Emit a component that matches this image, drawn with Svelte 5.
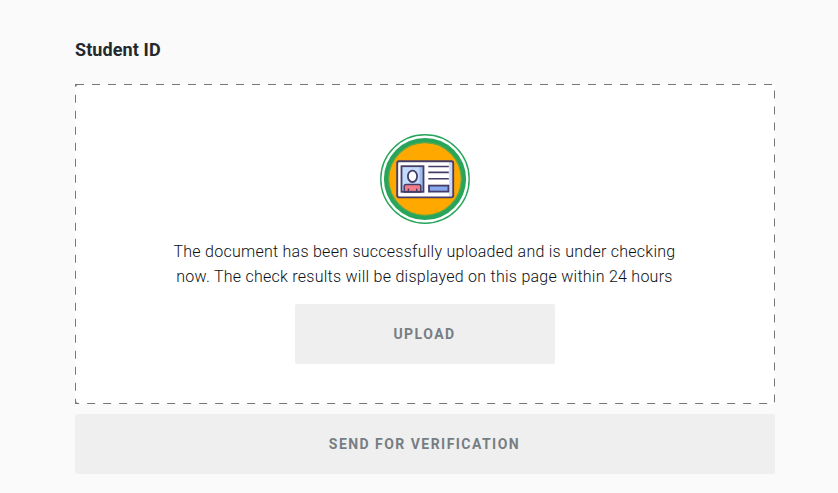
<script>
  let message = 'The document has been successfully uploaded and is under checking now. The check results will be displayed on this page within 24 hours';
</script>

<main>
  <h1>Student ID</h1>

  <section class="dropzone">
    <!-- dashed frame, drawn in svg to control the dash length -->
    <svg class="frame" width="700" height="320">
      <rect width="100%" height="100%" rx="3" />
    </svg>

    <svg class="icon" viewBox="0 0 90 90" width="90" height="90">
      <circle cx="45" cy="45" r="44.2" fill="#fff" stroke="#27a55a" stroke-width="1.4" />
      <circle cx="45" cy="45" r="41.1" fill="#27a55a" />
      <circle cx="45" cy="45" r="36.3" fill="#ffa800" stroke="#65a847" stroke-width="1.2" />
      <rect x="17.2" y="27.2" width="56" height="36.2" rx="1.8" fill="#fff" />
      <path d="M69.2 28h3v34.5h-3z" fill="#c8dbfc" />
      <rect x="17.2" y="27.2" width="56" height="36.2" rx="1.8" fill="none" stroke="#453d67" stroke-width="1.9" />
      <rect x="21.5" y="32.2" width="22" height="25.6" fill="#c3dcfb" />
      <path d="M39.5 33h3.5v24h-3.5z" fill="#9fbced" />
      <path d="M24.2 58v-5.5q0-2 2-2h12.6q2 0 2 2V58z" fill="#f47c86" stroke="#453d67" stroke-width="1.5" />
      <path d="M28.4 58v-3.5M36.7 58v-3.5" stroke="#453d67" stroke-width="1.3" />
      <ellipse cx="32.5" cy="42.3" rx="4.6" ry="5.7" fill="#fff" stroke="#453d67" stroke-width="1.8" />
      <rect x="21.5" y="32.2" width="22" height="25.6" fill="none" stroke="#453d67" stroke-width="1.8" />
      <path d="M48.3 32.5h20.5M48.3 38.4h20.5M48.3 44.7h20.5" stroke="#453d67" stroke-width="1.6" />
      <rect x="49" y="51.6" width="19.4" height="6" fill="#87a9ef" stroke="#453d67" stroke-width="1.8" />
    </svg>

    <p>{message}</p>
    <button class="upload" disabled>Upload</button>
  </section>

  <button class="send" disabled>Send for verification</button>
</main>

<style>
  :global(body) {
    background: #fafafa;
  }

  main {
    width: 700px;
    margin-left: 75px;
    padding-top: 36px;
    font-family: Roboto, sans-serif;
    color: #24292e;
  }

  h1 {
    margin: 0 0 20px;
    font-size: 18px;
    line-height: 28px;
    font-weight: 700;
    letter-spacing: 0.1px;
  }

  .dropzone {
    position: relative;
    display: flex;
    flex-direction: column;
    align-items: center;
    box-sizing: border-box;
    height: 320px;
    padding-top: 50px;
    background: #fff;
  }

  .frame {
    position: absolute;
    top: 0;
    left: 0;
    overflow: hidden;
  }

  .frame rect {
    fill: none;
    stroke: #777;
    stroke-width: 2;
    stroke-dasharray: 8 8;
    stroke-dashoffset: 2;
  }

  .icon {
    flex: none;
  }

  p {
    box-sizing: border-box;
    width: 520px;
    margin: 15px 0;
    padding-right: 1px;
    color: #0c1015;
    font-size: 16px;
    font-weight: 350;
    line-height: 25px;
    letter-spacing: 0.26px;
    text-align: center;
  }

  button {
    height: 60px;
    padding: 0 1px 0 0;
    border: none;
    border-radius: 2px;
    background: #efefef;
    color: #777e83;
    font-family: inherit;
    font-size: 14px;
    font-weight: 700;
    letter-spacing: 1.46px;
    text-transform: uppercase;
  }

  .upload {
    width: 260px;
  }

  .send {
    display: block;
    width: 100%;
    margin-top: 10px;
  }
</style>
